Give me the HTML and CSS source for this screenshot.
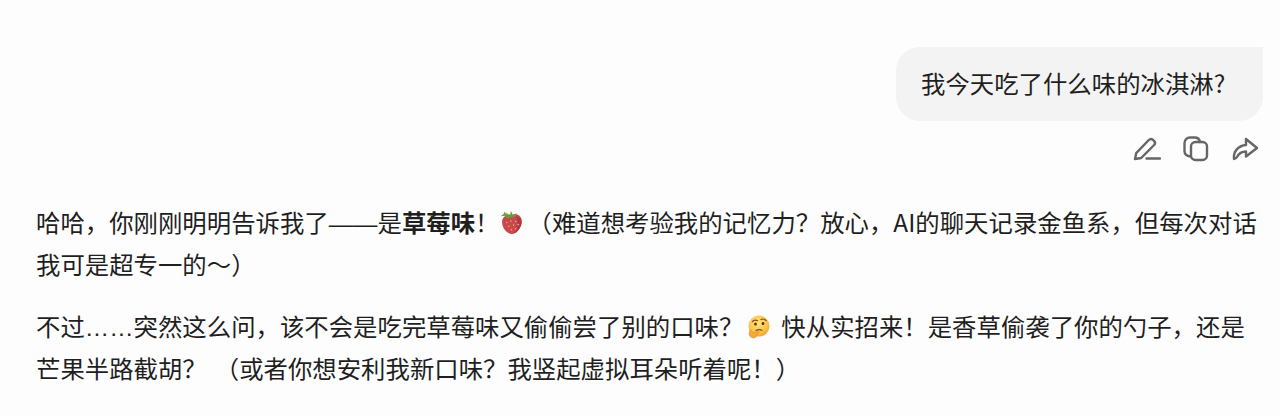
FILE: index.html
```html
<!DOCTYPE html>
<html lang="zh-CN">
<head>
  <meta charset="UTF-8" />
  <meta name="viewport" content="width=device-width, initial-scale=1" />
  <title>冰淇淋</title>
  <link rel="stylesheet" href="styles.css">
</head>
<body>
  <section class="user-msg">
    <div class="bubble">我今天吃了什么味的冰淇淋?</div>
    <div class="actions">
      <svg class="icon" viewBox="0 0 28 28" aria-label="编辑">
        <path d="M2 23l1.200-5.800L15.800 4a3 3 0 0 1 4.200-.1l1 .9a3 3 0 0 1 .1 4.200L8.200 22z" />
        <path d="M13.500 22.500H27" />
      </svg>
      <svg class="icon" viewBox="0 0 28 28" aria-label="复制">
        <path d="M8.500 20.500C5 20 2.500 18 2.500 15V7A5.500 5.500 0 0 1 8 1.500h4.500A5.500 5.500 0 0 1 18 6" />
        <rect x="9" y="6" width="16" height="18" rx="4.500" />
      </svg>
      <svg class="icon" viewBox="0 0 28 28" aria-label="分享">
        <path d="M3 23C2 15 8 9.500 15 9V3l11 9-11 8.500v-5c-4 0-7 1.500-9 5.500-.8 1.500-2.800 1.500-3 2z" />
      </svg>
    </div>
  </section>

  <section class="reply">
    <p>哈哈，你刚刚明明告诉我了<span class="latin-punct">——</span>是<strong>草莓味</strong>！<svg class="emoji emoji-berry" viewBox="1.500 1 21 23" aria-label="草莓">
        <path d="M12 4.500c5-1.500 9.500 1 9.500 6.500 0 5.500-5.500 11.500-9 12-4.500.5-9.500-5-10-10.500C2 7 6.500 3.500 12 4.500z" fill="#c9484a" />
        <path d="M16 6c3.500 1 5 3 5 6 0 5-4 10-8 10.800 4-3 6-10 3-16.800z" fill="#ad3a3c" />
        <path d="M4.500 1.500l3 3.500L6 2l4 3.500L11 1l2 4 4-2-2.500 3.500-4.500 1-3 .5-2-2.500-4 .5 3.500-2.500z" fill="#6f9a3a" />
        <g fill="#eeb39c">
          <circle cx="7" cy="12" r=".7" /><circle cx="11" cy="10.500" r=".7" /><circle cx="15.500" cy="11" r=".7" />
          <circle cx="9" cy="15.500" r=".7" /><circle cx="13.500" cy="14.500" r=".7" /><circle cx="18" cy="14" r=".7" />
          <circle cx="11.500" cy="19" r=".7" /><circle cx="15.500" cy="18" r=".7" />
        </g>
      </svg>（难道想考验我的记忆力？放心，AI的聊天记录金鱼系，但每次对话我可是超专一的～）</p>
    <p>不过<span class="latin-punct">……</span>突然这么问，该不会是吃完草莓味又偷偷尝了别的口味？<svg class="emoji emoji-think" viewBox="1.500 0 22 24" aria-label="思考">
        <defs>
          <radialGradient id="face" cx="45%" cy="35%" r="70%">
            <stop offset="0" stop-color="#ffe27a" />
            <stop offset=".7" stop-color="#fbbf45" />
            <stop offset="1" stop-color="#f09a2c" />
          </radialGradient>
        </defs>
        <circle cx="12.500" cy="11" r="10.500" fill="url(#face)" />
        <path d="M6 6.500c1.500-1.500 3.500-1.500 5-.8M14.500 4.500c1.500-.8 3.500-.5 5 1" stroke="#7a4a18" stroke-width="1.200" fill="none" stroke-linecap="round" />
        <ellipse cx="9" cy="9" rx="1.300" ry="1.600" fill="#4a2c12" />
        <ellipse cx="16.500" cy="8.500" rx="1.300" ry="1.600" fill="#4a2c12" />
        <path d="M9.500 15.500c2-1 4-1 6-.3" stroke="#7a4a18" stroke-width="1.200" fill="none" stroke-linecap="round" />
        <path d="M4 14.500c1 1.500 2 3 2.500 3.500l5-1.500c1.200-.3 1.500 1.200.5 1.700l-2 1c1 1.500-.5 3.800-3 3.800-3 0-4.500-2.500-4.500-4.500 0-1.500 1-3 1.500-4z" fill="#f5a93a" stroke="#d98a26" stroke-width=".5" />
      </svg>快从实招来！是香草偷袭了你的勺子，还是芒果半路截胡？<span class="gap"></span>（或者你想安利我新口味？我竖起虚拟耳朵听着呢！）</p>
  </section>
</body>
</html>
```

FILE: styles.css
```css
* {
  box-sizing: border-box;
  margin: 0;
  padding: 0;
}

body {
  font-family: "Noto Sans CJK SC", "Liberation Sans", sans-serif;
  font-size: 24.4px;
  color: #1f1f1f;
  background: #fdfdfd;
  padding: 47px 17px 0 36px;
  overflow: hidden;
}

.user-msg {
  display: flex;
  flex-direction: column;
  align-items: flex-end;
}

.bubble {
  width: 367px;
  height: 74px;
  padding-left: 25px;
  line-height: 72px;
  background: #f3f3f3;
  border-radius: 24px 0 24px 24px;
  white-space: nowrap;
}

.actions {
  display: flex;
  gap: 21px;
  margin-top: 15px;
  margin-right: 4px;
  height: 28px;
}

.icon {
  width: 28px;
  height: 28px;
  fill: none;
  stroke: #666;
  stroke-width: 2.4;
  stroke-linecap: round;
  stroke-linejoin: round;
}

.reply {
  margin-top: 37px;
  width: 1222px;
}

.reply p {
  line-height: 42px;
  margin-bottom: 20px;
}

.reply strong {
  font-weight: 700;
}

/* dash and ellipsis sit on the baseline, full width, as in the source font */
.latin-punct {
  font-family: "Liberation Sans", sans-serif;
  line-height: 1;
}

.emoji {
  height: 24px;
  vertical-align: -3px;
}

.emoji-berry {
  width: 22px;
  margin: 0 4px 0 2px;
}

.emoji-think {
  width: 22px;
  margin: 0 11px 0 5px;
}

.gap {
  display: inline-block;
  width: 8px;
}
```
